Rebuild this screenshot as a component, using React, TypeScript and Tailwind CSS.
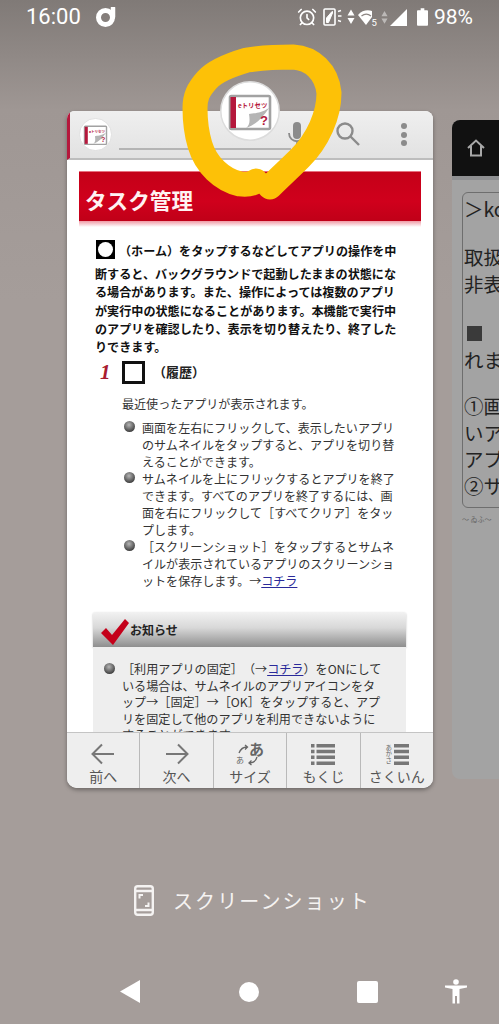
import { AlarmClock } from "lucide-react"

function AppIcon({ size, className }: { size: number; className?: string }) {
  return (
    <svg width={size} height={size} viewBox="0 0 60 60" className={className}>
      <circle cx="30" cy="30" r="29.2" fill="#ffffff" stroke="#dcdcdc" strokeWidth="1.5" />
      <rect x="10" y="15" width="40" height="33" rx="1.5" fill="#ffffff" stroke="#a2a2a2" strokeWidth="2.6" />
      <rect x="10.5" y="16" width="5.5" height="31" fill="#b5183c" />
      <path d="M49 27 C40 33 33 32 29 33 C30 39 30 44 26 47 C36 44 43 36 49 27 Z" fill="#b5b5b5" />
      <text x="18" y="26.5" fontSize="6.4" fontWeight="700" fill="#b5183c" fontFamily="'Noto Sans CJK JP',sans-serif">eトリセツ</text>
      <text x="40" y="44" fontSize="13" fontWeight="700" fill="#b5183c" fontFamily="'Liberation Sans',sans-serif">?</text>
    </svg>
  )
}

function StatusIcons() {
  return (
    <div className="flex items-center text-white">
      <AlarmClock size={20} strokeWidth={2} className="ml-[-1px] mr-[6px]" />
      <svg width="20" height="20" viewBox="0 0 20 20" className="mr-[2px]" fill="none" stroke="#fff">
        <rect x="1" y="2" width="11" height="16" rx="1" strokeWidth="1.6" />
        <path d="M3.5 15.5 V11 L9 4.5 H9.5 V6 L5.5 15.5 Z" fill="#fff" strokeWidth="1" />
        <path d="M15 4.5 L18 3.5 M15 9 H18.5 M15 13.5 L18 14.5" strokeWidth="1.4" />
      </svg>
      <svg width="8" height="16" viewBox="0 0 8 16" className="ml-[2px]" fill="#fff">
        <path d="M4 0.5 L7.5 6.5 H0.5 Z M0.5 9 H7.5 L4 15 Z" />
      </svg>
      <svg width="20" height="16" viewBox="0 0 20 16" fill="#fff" className="ml-[3px] mt-[2px]">
        <path d="M0 5 C4 0 10 -0.5 14 1 L14 7 L8 15 Z" />
        <path d="M3.5 6 C6.5 3.5 10 3.5 13 6" fill="none" stroke="#8d8683" strokeWidth="1.2" />
        <text x="13.5" y="15.5" fontSize="9.5" fontFamily="Roboto,sans-serif">5</text>
      </svg>
      <svg width="7" height="15" viewBox="0 0 8 16" fill="#fff" opacity="0.45" className="ml-[3px]">
        <path d="M4 0.5 L7.5 6.5 H0.5 Z M0.5 9 H7.5 L4 15 Z" />
      </svg>
      <svg width="17" height="17" viewBox="0 0 17 17" fill="#fff" className="ml-[2px]">
        <path d="M0 17 L17 0 V17 Z" />
      </svg>
      <svg width="11" height="18" viewBox="0 0 12 19" fill="#fff" className="ml-[10px]">
        <path d="M4 0 H8 V2 H11 A1 1 0 0 1 12 3 V18 A1 1 0 0 1 11 19 H1 A1 1 0 0 1 0 18 V3 A1 1 0 0 1 1 2 H4 Z" />
      </svg>
      <span className="ml-[6px] font-['Roboto',sans-serif] text-[21px] leading-none">98%</span>
    </div>
  )
}

function Bullet() {
  return <span className="mt-[2px] h-[11px] w-[11px] shrink-0 rounded-full bg-[radial-gradient(circle_at_45%_35%,#b5b5b5,#3f3f3f_75%)]" />
}

function BulletRow({ lines }: { lines: React.ReactNode[] }) {
  return (
    <div className="ml-[2px] flex gap-[7px]">
      <Bullet />
      <div className="whitespace-nowrap">
        {lines.map((line, i) => (
          <div key={i}>{line}</div>
        ))}
      </div>
    </div>
  )
}

function NavItem({ label, icon, last }: { label: string; icon: React.ReactNode; last?: boolean }) {
  return (
    <div className={`flex h-full flex-1 flex-col items-center ${last ? "" : "border-r border-[#b9b9b9]"}`}>
      <div className="mt-[9px] flex h-[24px] items-center justify-center">{icon}</div>
      <span className="whitespace-nowrap text-[14px] leading-[20px] text-[#555]">{label}</span>
    </div>
  )
}

function MainCard() {
  return (
    <div className="flex h-[677px] w-[366px] shrink-0 flex-col overflow-hidden rounded-t-[8px] rounded-b-[10px] bg-white shadow-[0_2px_4px_rgba(0,0,0,0.35)]">
      {/* app toolbar */}
      <div className="flex h-[49px] shrink-0 items-center border-b-2 border-l-[3px] border-b-[#bdbdbd] border-l-[#b5183c] bg-[linear-gradient(#efefef,#e2e2e2)]">
        <AppIcon size={33} className="ml-[9px]" />
        <div className="ml-[7px] mt-[28px] h-[2px] w-[172px] bg-[#b4b4b4]" />
        <svg width="20" height="26" viewBox="0 0 20 26" className="ml-[-4px]" fill="none">
          <rect x="6" y="0" width="8" height="17" rx="4" fill="#8b8b8b" />
          <path d="M2 11 C2 22 18 22 18 11 M10 20 V26" stroke="#8b8b8b" strokeWidth="1.8" />
        </svg>
        <svg width="24" height="25" viewBox="0 0 24 25" className="ml-[29px]" fill="none" stroke="#8b8b8b" strokeWidth="2.4">
          <circle cx="9" cy="9" r="7.5" />
          <path d="M14.5 14.5 L23 23" />
        </svg>
        <div className="ml-[41px] flex flex-col gap-[2.5px]">
          <span className="h-[6px] w-[6px] rounded-full bg-[#8b8b8b]" />
          <span className="h-[6px] w-[6px] rounded-full bg-[#8b8b8b]" />
          <span className="h-[6px] w-[6px] rounded-full bg-[#8b8b8b]" />
        </div>
      </div>

      {/* manual page */}
      <div className="min-h-0 flex-1 overflow-hidden bg-white pt-[11px]">
        <div className="mx-[12px] flex h-[50px] items-center border-t border-[#e8707f] bg-[linear-gradient(#c40018,#d0001c_60%,#c00018)] pl-[6px] pt-[6px]">
          <span className="text-[21.6px] font-bold leading-none text-[#fff2f2]">タスク管理</span>
        </div>
        <div className="mx-[12px] h-[6px] bg-[linear-gradient(#f09aa5,#ffffff)]" />

        <div className="ml-[28px] mt-[11px] whitespace-nowrap text-[12.1px] font-bold leading-[18.2px] text-[#111]">
          <div className="flex items-center">
            <span className="ml-[1px] flex h-[19px] w-[19px] items-center justify-center bg-black">
              <span className="h-[15px] w-[15px] rounded-full bg-white" />
            </span>
            <span className="ml-[4px] mt-[4px]">（ホーム）をタップするなどしてアプリの操作を中</span>
          </div>
          <div className="mt-[5px]">断すると、バックグラウンドで起動したままの状態にな</div>
          <div>る場合があります。また、操作によっては複数のアプリ</div>
          <div>が実行中の状態になることがあります。本機能で実行中</div>
          <div>のアプリを確認したり、表示を切り替えたり、終了した</div>
          <div>りできます。</div>
        </div>

        <div className="ml-[33px] mt-[4px] flex h-[24px] items-center">
          <span className="w-[22px] font-['Liberation_Serif',serif] text-[21px] font-bold italic leading-none text-[#a81c30]">1</span>
          <span className="h-[23px] w-[23px] border-[3px] border-[#111] bg-white" />
          <span className="ml-[8px] text-[13px] font-bold text-[#222]">（履歴）</span>
        </div>

        <div className="ml-[55px] mt-[11px] flex flex-col text-[12.05px] leading-[17px] text-[#333]">
          <div className="mb-[7px] whitespace-nowrap">最近使ったアプリが表示されます。</div>
          <BulletRow lines={["画面を左右にフリックして、表示したいアプリ", "のサムネイルをタップすると、アプリを切り替", "えることができます。"]} />
          <BulletRow lines={["サムネイルを上にフリックするとアプリを終了", "できます。すべてのアプリを終了するには、画", "面を右にフリックして［すべてクリア］をタッ", "プします。"]} />
          <BulletRow
            lines={[
              "［スクリーンショット］をタップするとサムネ",
              "イルが表示されているアプリのスクリーンショ",
              <>ットを保存します。→<span className="text-[#2a2a9a] underline">コチラ</span></>,
            ]}
          />
        </div>

        {/* notice box */}
        <div className="ml-[26px] mt-[23px] w-[313px]">
          <div className="flex h-[35px] items-center rounded-t-[2px] bg-[linear-gradient(#f2f2f2,#d8d8d8_45%,#8e8e8e)] shadow-[0_1px_2px_rgba(0,0,0,0.3)]">
            <svg width="30" height="28" viewBox="0 0 30 28" className="ml-[7px] mt-[4px]">
              <path d="M1 15 L6 10 L12 17 L25 1 L29 5 L13 27 Z" fill="#c4001a" />
            </svg>
            <span className="text-[12px] font-bold text-[#222]">お知らせ</span>
          </div>
          <div className="h-[120px] bg-[#eeeeee] pl-[11px] pt-[14px] text-[12.1px] leading-[16.5px] text-[#333]">
            <div className="flex gap-[7px]">
              <Bullet />
              <div className="whitespace-nowrap">
                <div>［利用アプリの固定］（→<span className="text-[#2a2a9a] underline">コチラ</span>）をONにして</div>
                <div>いる場合は、サムネイルのアプリアイコンをタ</div>
                <div>ップ→［固定］→［OK］をタップすると、アプ</div>
                <div>リを固定して他のアプリを利用できないように</div>
                <div>することができます。</div>
              </div>
            </div>
          </div>
        </div>
      </div>

      {/* manual bottom nav */}
      <div className="flex h-[56px] shrink-0 items-center border-t border-[#c4c4c4] bg-[#eeeeee]">
        <NavItem
          label="前へ"
          icon={
            <svg width="24" height="22" viewBox="0 0 24 22" fill="none" stroke="#777" strokeWidth="2">
              <path d="M23 11 H2 M11 1.5 L1.5 11 L11 20.5" />
            </svg>
          }
        />
        <NavItem
          label="次へ"
          icon={
            <svg width="24" height="22" viewBox="0 0 24 22" fill="none" stroke="#777" strokeWidth="2">
              <path d="M1 11 H22 M13 1.5 L22.5 11 L13 20.5" />
            </svg>
          }
        />
        <NavItem
          label="サイズ"
          icon={
            <span className="relative block h-[24px] w-[28px] text-[#666]">
              <span className="absolute right-0 top-[-1px] text-[15px] font-bold leading-[16px]">あ</span>
              <span className="absolute bottom-[1px] left-0 text-[8px] leading-[10px]">あ</span>
              <svg width="28" height="24" viewBox="0 0 28 24" fill="none" stroke="#666" strokeWidth="1.3" className="absolute left-0 top-0">
                <path d="M3 11 C5 6 8 5 11 5 M9 3 L11.5 5 L9 7.5" />
                <path d="M21 15 C20 19 17 21 13 21 M15.5 18.5 L13 21 L15.5 23" />
              </svg>
            </span>
          }
        />
        <NavItem
          label="もくじ"
          icon={
            <svg width="24" height="21" viewBox="0 0 24 21" fill="#777">
              <path d="M0 0 H3.5 V3.5 H0 Z M5.5 0 H24 V3.5 H5.5 Z M0 5.8 H3.5 V9.3 H0 Z M5.5 5.8 H24 V9.3 H5.5 Z M0 11.6 H3.5 V15.1 H0 Z M5.5 11.6 H24 V15.1 H5.5 Z M0 17.4 H3.5 V20.9 H0 Z M5.5 17.4 H24 V20.9 H5.5 Z" />
            </svg>
          }
        />
        <NavItem
          last
          label="さくいん"
          icon={
            <span className="flex items-center gap-[2px]">
              <span className="text-[6.5px] leading-[7px] text-[#666] [writing-mode:vertical-rl]">あかさ</span>
              <svg width="15" height="21" viewBox="0 0 15 21" fill="#777">
                <path d="M0 0 H15 V3.5 H0 Z M0 5.8 H15 V9.3 H0 Z M0 11.6 H15 V15.1 H0 Z M0 17.4 H15 V20.9 H0 Z" />
              </svg>
            </span>
          }
        />
      </div>
    </div>
  )
}

function NextCard() {
  return (
    <div className="flex h-[659px] w-[60px] shrink-0 flex-col overflow-hidden rounded-tl-[8px] rounded-bl-[8px] bg-[#a3a3a3]">
      <div className="flex h-[56px] shrink-0 items-center bg-[#111111] pl-[15px]">
        <svg width="18" height="18" viewBox="0 0 18 18" fill="none" stroke="#a8a8a8" strokeWidth="2">
          <path d="M1 9 L9 1.5 L17 9 M4 7 V16.5 H14 V7" />
        </svg>
      </div>
      <div className="h-[4px] bg-[#8f9092]" />
      <div className="ml-[10px] mt-[12px] h-[316px] w-[80px] whitespace-nowrap rounded-[6px] border border-[#6e6e6e] pl-[1px] pt-[3px] text-[19.5px] leading-[26px] text-[#222]">
        <div>＞ko</div>
        <div className="mt-[22px]">取扱説</div>
        <div className="mt-[1px]">非表示</div>
        <div className="ml-[3px] mt-[29px] h-[15px] w-[15px] bg-[#3a3a3a]" />
        <div className="mt-[6px]">れまで</div>
        <div className="mt-[20px]">①画面</div>
        <div className="mt-[1px]">いアプ</div>
        <div>アプリ</div>
        <div className="mt-[1px]">②サム</div>
      </div>
      <div className="ml-[10px] mt-[8px] whitespace-nowrap text-[7px] leading-none text-[#666]">～ ゐふ～</div>
    </div>
  )
}

export default function App() {
  return (
    <div className="relative flex h-[1024px] w-[499px] flex-col overflow-hidden bg-[linear-gradient(#807a77_0px,#9f9794_110px,#a59d9a_300px)] font-['Noto_Sans_CJK_JP','Roboto',sans-serif] [text-spacing-trim:space-all]">
      {/* status bar */}
      <div className="flex h-[34px] shrink-0 items-center justify-between pl-[26px] pr-[26px] text-white">
        <div className="flex items-center">
          <span className="font-['Roboto',sans-serif] text-[22px] leading-none">16:00</span>
          <svg width="22" height="20" viewBox="0 0 22 20" className="ml-[14px]" fill="none" stroke="#fff">
            <circle cx="10.5" cy="10.5" r="7" strokeWidth="5" />
            <path d="M18 1 V10" strokeWidth="4.5" strokeLinecap="round" />
          </svg>
        </div>
        <StatusIcons />
      </div>

      {/* recents */}
      <div className="mt-[77px] flex items-center gap-[19px] pl-[67px]">
        <MainCard />
        <NextCard />
      </div>

      {/* screenshot action */}
      <div className="ml-[134px] mt-[97px] flex items-center text-[#f5f3f2]">
        <svg width="20" height="31" viewBox="0 0 20 31" fill="none" stroke="#f5f3f2" strokeWidth="2.4">
          <rect x="1.2" y="1.2" width="17.6" height="28.6" rx="2.5" />
          <path d="M1 6 H19 M1 25 H19" />
          <path d="M5.5 13.5 V10 H9 M14.5 17.5 V21 H11" strokeWidth="2" />
        </svg>
        <span className="ml-[19px] whitespace-nowrap text-[20px] leading-none tracking-[2.1px]">スクリーンショット</span>
      </div>

      {/* android nav */}
      <div className="ml-[120px] mt-[63px] flex items-center">
        <svg width="20" height="23" viewBox="0 0 20 23" fill="#fff">
          <path d="M20 0 V23 L0 11.5 Z" />
        </svg>
        <span className="ml-[99px] h-[20px] w-[20px] rounded-full bg-white" />
        <span className="ml-[98px] h-[22px] w-[21px] rounded-[2px] bg-white" />
        <svg width="24" height="25" viewBox="0 0 24 25" fill="#fff" className="ml-[66px]">
          <circle cx="12" cy="3" r="2.8" />
          <path d="M1 6.5 L23 6.5 L23 8.5 L15.5 10 V24.5 H13 V17 H11 V24.5 H8.5 V10 L1 8.5 Z" />
        </svg>
      </div>

      {/* hand-drawn marker and the app icon that floats above the card */}
      <AppIcon size={60} className="absolute left-[220px] top-[81px]" />
      <svg width="499" height="260" viewBox="0 0 499 260" fill="none" className="absolute left-0 top-0">
        <path
          d="M270 187 C280 177 290 168 300 158 C318 140 329 115 329 93 C327 72 312 58 293 57 C275 57 260 58 247 60 C230 65 214 72 207 80 C198 90 195 97 195 108 C195 125 197 135 200 145 C206 165 222 180 240 184 C247 185 252 184 256 181"
          stroke="#fdc107"
          strokeWidth="25"
          strokeLinecap="round"
          strokeLinejoin="round"
        />
      </svg>
    </div>
  )
}
